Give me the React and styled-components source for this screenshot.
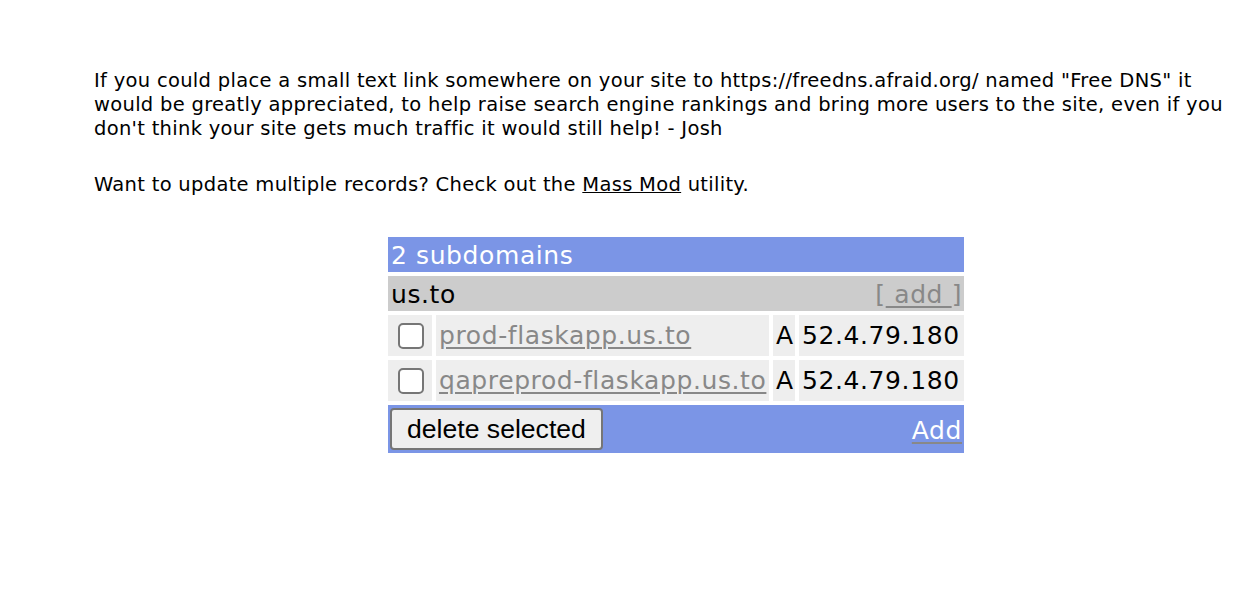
import React from "react";
import styled, { createGlobalStyle } from "styled-components";

const Global = createGlobalStyle`
  html, body { margin: 0; padding: 0; background: #fff; }
  body { font-family: "DejaVu Sans", Verdana, sans-serif; color: #000; }
`;

const Page = styled.div`
  padding: 69px 0 0 94px;
  width: 1164px;
`;

const Para = styled.p`
  margin: 0 0 32px 0;
  max-width: 1130px;
  font-size: 19.5px;
  letter-spacing: 0.3px;
  line-height: 24px;
`;

const TextLink = styled.a`
  color: #000;
  text-decoration: underline;
`;

const TableWrap = styled.div`
  display: flex;
  justify-content: center;
  margin-top: 36px;
`;

const Table = styled.table`
  border-collapse: separate;
  border-spacing: 4px;
  font-size: 25px;
  letter-spacing: 0.6px;
  width: 584px;
  table-layout: fixed;
`;

const HeadCell = styled.td`
  background: #7b95e6;
  color: #fff;
  padding: 3px 3px 0;
  height: 35px;
  box-sizing: border-box;
  line-height: 30px;
  vertical-align: middle;
`;

const ZoneCell = styled.td`
  background: #cccccc;
  padding: 3px 2px 0 3px;
  height: 35px;
  box-sizing: border-box;
  line-height: 28px;
`;

const ZoneRow = styled.div`
  display: flex;
  justify-content: space-between;
  align-items: center;
`;

const AddBracket = styled.span`
  color: #888;
`;

const GrayLink = styled.a`
  color: #888;
  text-decoration: underline;
  text-decoration-thickness: 2px;
  text-underline-offset: 3px;
`;

const Cell = styled.td`
  background: #eeeeee;
  padding: 0 0 0 3px;
  height: ${(p) => p.$h}px;
  box-sizing: border-box;
  white-space: nowrap;
  overflow: visible;
  vertical-align: middle;
`;

const CheckCell = styled.td`
  background: #eeeeee;
  box-sizing: border-box;
  padding: 0;
  vertical-align: middle;
`;

const Check = styled.input.attrs({ type: "checkbox" })`
  appearance: none;
  display: block;
  width: 26px;
  height: 26px;
  margin: 0 0 0 10px;
  border: 2px solid #767676;
  border-radius: 5px;
  background: #fff;
  box-sizing: border-box;
`;

const FootCell = styled.td`
  background: #7b95e6;
  padding: 2px;
  height: 48px;
  box-sizing: border-box;
`;

const FootRow = styled.div`
  display: flex;
  justify-content: space-between;
  align-items: center;
`;

const Button = styled.button`
  font-family: "Liberation Sans", Arial, sans-serif;
  font-size: 26.6px;
  letter-spacing: 0;
  color: #000;
  background: #efefef;
  border: 2px solid #767676;
  border-radius: 4px;
  height: 42px;
  padding: 0 15px;
  margin: 0;
`;

const WhiteLink = styled.a`
  color: #fff;
  text-decoration: underline;
  text-decoration-color: #888;
  text-decoration-thickness: 2px;
  text-underline-offset: 3px;
  line-height: 28px;
  margin-top: 4px;
`;

const Col = styled.col`
  width: ${(p) => p.$w}px;
`;

const records = [
  { name: "prod-flaskapp.us.to", type: "A", value: "52.4.79.180", h: 41 },
  { name: "qapreprod-flaskapp.us.to", type: "A", value: "52.4.79.180", h: 41 },
];

export default function App() {
  return (
    <>
      <Global />
      <Page>
        <Para>
          If you could place a small text link somewhere on your site to
          https://freedns.afraid.org/ named "Free DNS" it would be greatly
          appreciated, to help raise search engine rankings and bring more
          users to the site, even if you don't think your site gets much
          traffic it would still help! - Josh
        </Para>
        <Para>
          Want to update multiple records? Check out the{" "}
          <TextLink href="#">Mass Mod</TextLink> utility.
        </Para>
        <TableWrap>
          <Table>
            <colgroup>
              <Col $w={44} />
              <Col $w={333} />
              <Col $w={22} />
              <Col $w={165} />
            </colgroup>
            <tbody>
              <tr>
                <HeadCell colSpan={4}>2 subdomains</HeadCell>
              </tr>
              <tr>
                <ZoneCell colSpan={4}>
                  <ZoneRow>
                    <span>us.to</span>
                    <AddBracket>
                      [<GrayLink href="#">&nbsp;add&nbsp;</GrayLink>]
                    </AddBracket>
                  </ZoneRow>
                </ZoneCell>
              </tr>
              {records.map((r) => (
                <tr key={r.name}>
                  <CheckCell>
                    <Check />
                  </CheckCell>
                  <Cell $h={r.h}>
                    <GrayLink href="#">{r.name}</GrayLink>
                  </Cell>
                  <Cell $h={r.h}>{r.type}</Cell>
                  <Cell $h={r.h}>{r.value}</Cell>
                </tr>
              ))}
              <tr>
                <FootCell colSpan={4}>
                  <FootRow>
                    <Button>delete selected</Button>
                    <WhiteLink href="#">Add</WhiteLink>
                  </FootRow>
                </FootCell>
              </tr>
            </tbody>
          </Table>
        </TableWrap>
      </Page>
    </>
  );
}
